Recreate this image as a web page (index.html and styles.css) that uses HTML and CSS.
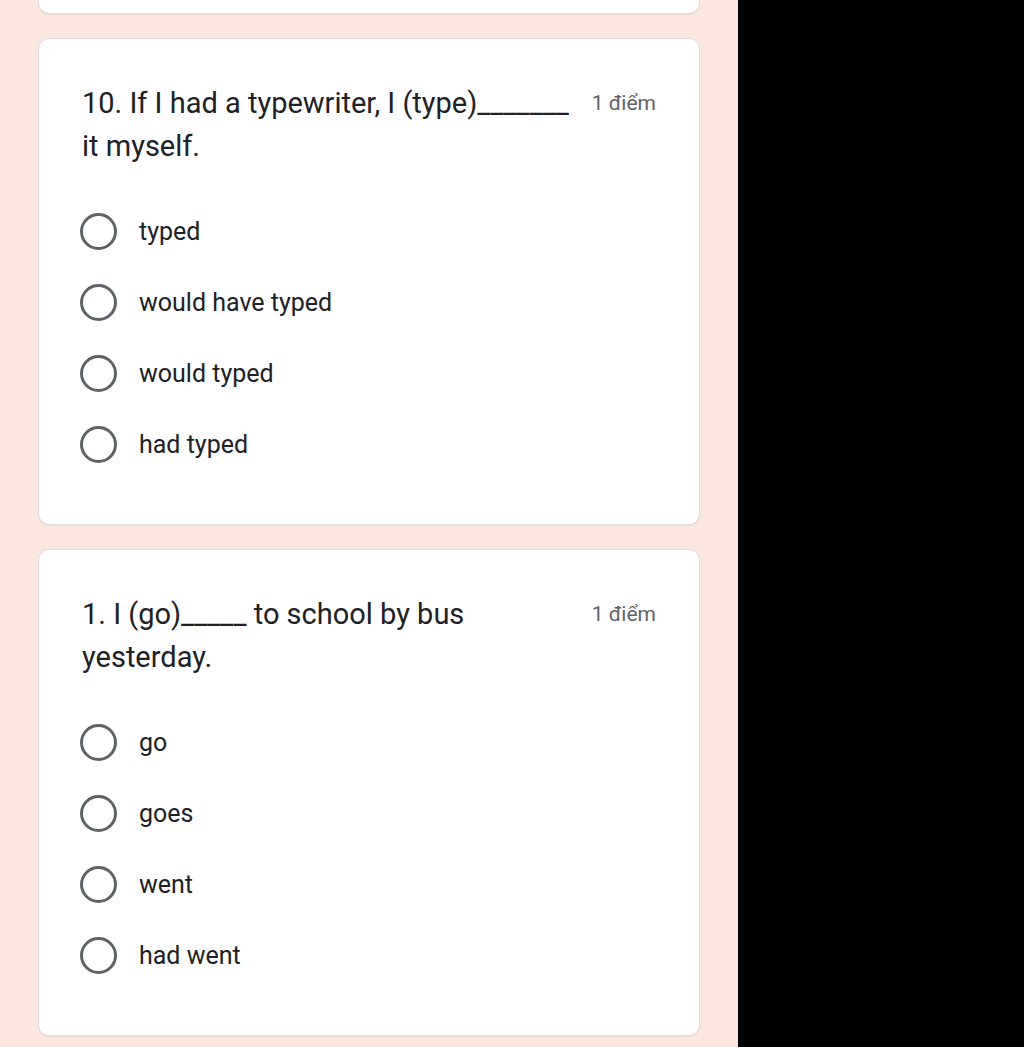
FILE: index.html
```html
<!DOCTYPE html>
<html lang="vi">
<head>
    <meta charset="UTF-8">
    <meta name="viewport" content="width=device-width, initial-scale=1.0">
    <title>Bài kiểm tra</title>
    <link rel="stylesheet" href="styles.css">
</head>
<body>

    <!-- cột form -->
    <div class="form-area">

        <!-- phần cuối của câu trước -->
        <div class="card card-tail"></div>

        <!-- câu 10 -->
        <div class="card">
            <div class="question">
                <div class="title">10. If I had a typewriter, I (type)_______ it myself.</div>
                <div class="points">1 điểm</div>
            </div>
            <div class="options">
                <label class="option"><span class="radio"></span>typed</label>
                <label class="option"><span class="radio"></span>would have typed</label>
                <label class="option"><span class="radio"></span>would typed</label>
                <label class="option"><span class="radio"></span>had typed</label>
            </div>
        </div>

        <!-- câu 1 -->
        <div class="card">
            <div class="question">
                <div class="title">1. I (go)_____ to school by bus yesterday.</div>
                <div class="points">1 điểm</div>
            </div>
            <div class="options">
                <label class="option"><span class="radio"></span>go</label>
                <label class="option"><span class="radio"></span>goes</label>
                <label class="option"><span class="radio"></span>went</label>
                <label class="option"><span class="radio"></span>had went</label>
            </div>
        </div>

    </div>

    <div class="side"></div>

</body>
</html>
```

FILE: styles.css
```css
/* trang */
body {
    margin: 0;
    display: flex;
    height: 1047px;
    overflow: hidden;
    background: #fce6e0;
    font-family: 'Roboto', 'Liberation Sans', sans-serif;
    color: #202124;
}

.form-area {
    width: 662px;
    padding-left: 38px;
    padding-right: 38px;
    display: flex;
    flex-direction: column;
    gap: 24px;
}

.side {
    flex: 1;
    background: #000;
}

/* thẻ câu hỏi */
.card {
    background: #fff;
    border: 1px solid #e2dcd9;
    border-radius: 11px;
    box-shadow: 0 1px 1px rgba(0, 0, 0, 0.06);
    padding: 43px 43px 44px 43px;
}

.card-tail {
    height: 14px;
    padding: 0;
    border-top: none;
    border-radius: 0 0 11px 11px;
    margin-top: -1px;
}

.question {
    display: flex;
    align-items: flex-start;
    gap: 16px;
}

.title {
    flex: 1;
    font-size: 29px;
    line-height: 43px;
}

.points {
    font-size: 21px;
    line-height: 43px;
    color: #5f6368;
    white-space: nowrap;
}

/* các lựa chọn */
.options {
    margin-top: 28px;
    display: flex;
    flex-direction: column;
}

.option {
    display: flex;
    align-items: center;
    height: 71px;
    font-size: 25px;
}

.radio {
    width: 31px;
    height: 31px;
    border: 3px solid #5f6368;
    border-radius: 50%;
    margin-left: -2px;
    margin-right: 22px;
    flex-shrink: 0;
}
```
